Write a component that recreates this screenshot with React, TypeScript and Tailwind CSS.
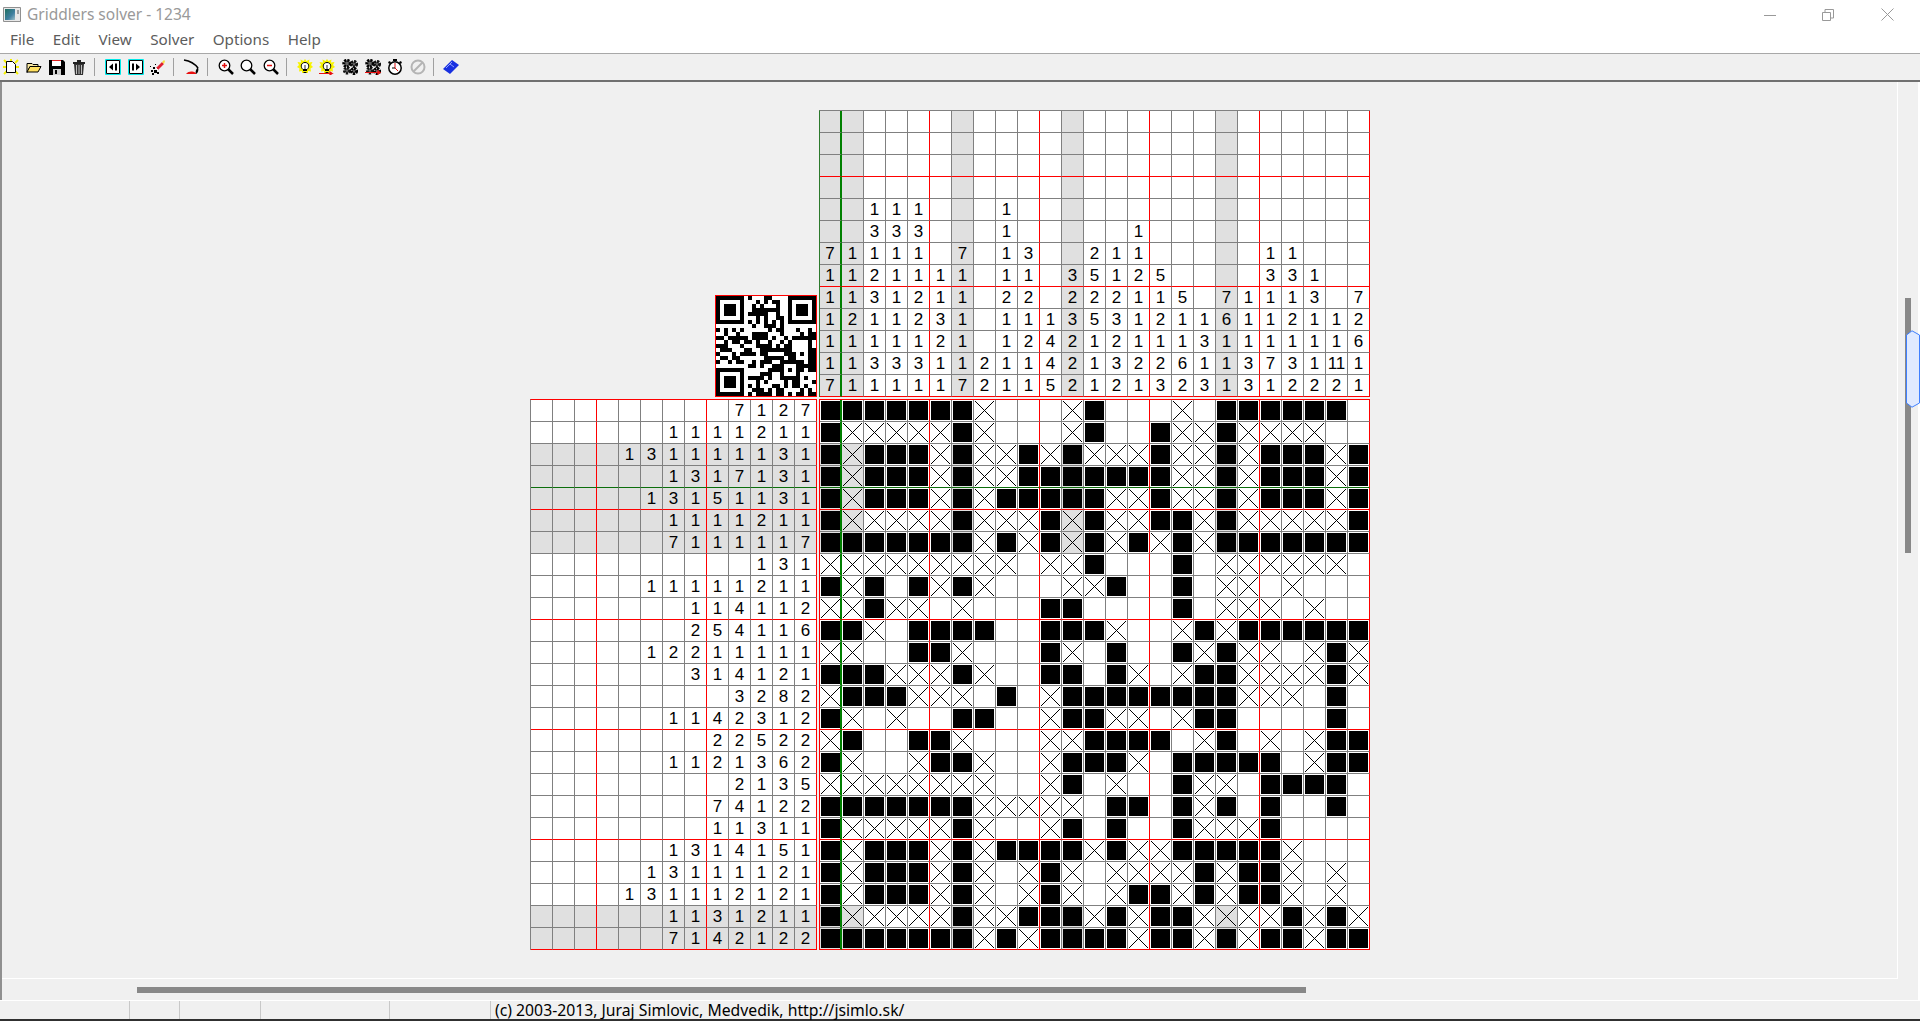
import * as React from "react";

const uiFont = "font-['Noto_Sans','Open_Sans',sans-serif]";

const topClues = [
  ". . . . . . . . . . . . . . . . . . . . . . . . .",
  ". . . . . . . . . . . . . . . . . . . . . . . . .",
  ". . . . . . . . . . . . . . . . . . . . . . . . .",
  ". . . . . . . . . . . . . . . . . . . . . . . . .",
  ". . 1 1 1 . . . 1 . . . . . . . . . . . . . . . .",
  ". . 3 3 3 . . . 1 . . . . . 1 . . . . . . . . . .",
  "7 1 1 1 1 . 7 . 1 3 . . 2 1 1 . . . . . 1 1 . . .",
  "1 1 2 1 1 1 1 . 1 1 . 3 5 1 2 5 . . . . 3 3 1 . .",
  "1 1 3 1 2 1 1 . 2 2 . 2 2 2 1 1 5 . 7 1 1 1 3 . 7",
  "1 2 1 1 2 3 1 . 1 1 1 3 5 3 1 2 1 1 6 1 1 2 1 1 2",
  "1 1 1 1 1 2 1 . 1 2 4 2 1 2 1 1 1 3 1 1 1 1 1 1 6",
  "1 1 3 3 3 1 1 2 1 1 4 2 1 3 2 2 6 1 1 3 7 3 1 11 1",
  "7 1 1 1 1 1 7 2 1 1 5 2 1 2 1 3 2 3 1 3 1 2 2 2 1",
].map((row) => row.split(" "));

const leftClues = [
  "7 1 2 7",
  "1 1 1 1 2 1 1",
  "1 3 1 1 1 1 1 3 1",
  "1 3 1 7 1 3 1",
  "1 3 1 5 1 1 3 1",
  "1 1 1 1 2 1 1",
  "7 1 1 1 1 1 7",
  "1 3 1",
  "1 1 1 1 1 2 1 1",
  "1 1 4 1 1 2",
  "2 5 4 1 1 6",
  "1 2 2 1 1 1 1 1",
  "3 1 4 1 2 1",
  "3 2 8 2",
  "1 1 4 2 3 1 2",
  "2 2 5 2 2",
  "1 1 2 1 3 6 2",
  "2 1 3 5",
  "7 4 1 2 2",
  "1 1 3 1 1",
  "1 3 1 4 1 5 1",
  "1 3 1 1 1 1 2 1",
  "1 3 1 1 1 2 1 2 1",
  "1 1 3 1 2 1 1",
  "7 1 4 2 1 2 2",
].map((row) => {
  const tokens = row.split(" ");
  return [...Array(13 - tokens.length).fill("."), ...tokens] as string[];
});

// # filled, x crossed, . unknown
const board = [
  "#######x...x#...x.######.",
  "#xxxxx#x...x#..#xx#xxxx..",
  "#x###x#xx#x#xxx#xx#x###x#",
  "#x###x#xx#######xx#x###x#",
  "#x###x#x#####xx#xx#x###x#",
  "#xxxxx#xxx#x#xx##x#xxxxx#",
  "#######x#x#x#x#x#x#######",
  "xxxxxxxxx.xx#...#.xxxxxx.",
  "#x#.#x#x...xx#..#.xx.x...",
  "xx#xx.x...##....#.xxx.x..",
  "##x.####..###x..x#x######",
  "xx..##x...#x.#..#x#xx.x#x",
  "###xxx#x..##.#x.x##xxxx#x",
  "x###xxx.#.x########xxx.#.",
  "#x.x..##..x##xx.x##....#.",
  "x#..##x...xx####.x#.x.x##",
  "#x..x##x..x###x.#####.x##",
  "xxxxxxxx..x#.x..#xx.####.",
  "#######xxxxx.##.#x#.#..#.",
  "#xxxxx#x..x#.#..#xxx#....",
  "#x###x#x####x#xx#####x...",
  "#x###x#x.x#x.xxxx#x##x.x.",
  "#x###x#x.x#x.x##x#x##x.x.",
  "#xxxxx#xx###x#x##xxxx#x#x",
  "#######x#x####x##x#x##x##",
];

const qr = [
  "#######.#...##....#######",
  "#.....#...#.#.##..#.....#",
  "#.###.#..#.#...#..#.###.#",
  "#.###.#..#######..#.###.#",
  "#.###.#.#####..#..#.###.#",
  "#.....#...#.#..##.#.....#",
  "#######.#.#.#.#.#.#######",
  ".........#..###.#........",
  "#.#.#.#......#.##...#..#.",
  "..#..#...####...#....#.##",
  "##.#####.####.#..#.######",
  "..#.##.##.#..#..#.#....#.",
  "###...#...####.#.##....#.",
  ".###...##..########....##",
  "#...#.####.##....###.#.##",
  ".##.##......#####.##...##",
  "#..#.##..#.###..######.##",
  "........##.#..###...#####",
  "#######......####.#.##.##",
  "#.....#....###..#...#....",
  "#.###.#.####.#..#####.#..",
  "#.###.#...#.#....#.##...#",
  "#.###.#.#.#...##.#.##.#..",
  "#.....#..###.#.##....#.#.",
  "#######.#.####.##.#.##.##",
];

const hiCols = [0, 1, 6, 11, 18];
const hiRows = [2, 3, 4, 5, 6, 23, 24];

const colBorder = (c: number) =>
  c === 0
    ? "border-r-2 border-r-[#008000]"
    : (c + 1) % 5 === 0
      ? "border-r border-r-[#ff0000]"
      : "border-r border-r-[#808080]";

const rowBorder = (r: number) =>
  r === 3
    ? "border-b border-b-[#0c6f0c]"
    : (r + 1) % 5 === 0
      ? "border-b border-b-[#ff0000]"
      : "border-b border-b-[#808080]";

function Clue({ value, cls }: { value: string; cls: string }) {
  return (
    <div
      className={`flex size-[22px] items-center justify-center text-[17px] leading-none text-black ${cls}`}
    >
      {value === "." ? "" : value}
    </div>
  );
}

function Cell({ state, r, c }: { state: string; r: number; c: number }) {
  const shaded = hiCols.includes(c) && hiRows.includes(r);
  return (
    <div
      className={`size-[22px] ${c === 0 ? "py-px pl-px" : "p-px"} ${shaded ? "bg-[#e0e0e0]" : "bg-white"} ${colBorder(c)} ${rowBorder(r)}`}
    >
      {state === "#" && <div className="size-full bg-black" />}
      {state === "x" && (
        <svg viewBox="0 0 19 19" className="block size-full" shapeRendering="crispEdges">
          <path d="M0 0 19 19M19 0 0 19" stroke="#000" strokeWidth="1" fill="none" />
        </svg>
      )}
    </div>
  );
}

function QrPreview() {
  return (
    <div className="grid grid-cols-[repeat(25,4px)] border border-[#ff0000] bg-white">
      {qr.flatMap((row, r) =>
        row.split("").map((m, c) => (
          <div key={`${r}-${c}`} className={`size-[4px] ${m === "#" ? "bg-black" : "bg-white"}`} />
        ))
      )}
    </div>
  );
}

function Puzzle() {
  return (
    <div className="grid grid-cols-[287px_551px] grid-rows-[287px_551px] gap-[2px] font-['Liberation_Sans',Arial,sans-serif]">
      <div className="flex items-end justify-end">
        <QrPreview />
      </div>

      {/* Column clues */}
      <div className="grid grid-cols-[repeat(25,22px)] border-t border-l border-t-[#808080] border-l-[#2c7a2c] bg-white">
        {topClues.flatMap((row, r) =>
          row.map((value, c) => (
            <Clue
              key={`${r}-${c}`}
              value={value}
              cls={`${hiCols.includes(c) ? "bg-[#e0e0e0]" : "bg-white"} ${colBorder(c)} ${
                (r + 1) % 5 === 3 ? "border-b border-b-[#ff0000]" : "border-b border-b-[#808080]"
              }`}
            />
          ))
        )}
      </div>

      {/* Row clues */}
      <div className="grid grid-cols-[repeat(13,22px)] border-t border-l border-t-[#ff0000] border-l-[#808080] bg-white">
        {leftClues.flatMap((row, r) =>
          row.map((value, c) => (
            <Clue
              key={`${r}-${c}`}
              value={value}
              cls={`${hiRows.includes(r) ? "bg-[#e0e0e0]" : "bg-white"} ${rowBorder(r)} ${
                (c + 1) % 5 === 3 ? "border-r border-r-[#ff0000]" : "border-r border-r-[#808080]"
              }`}
            />
          ))
        )}
      </div>

      {/* Board */}
      <div className="grid grid-cols-[repeat(25,22px)] border-t border-l border-[#ff0000] bg-white">
        {board.flatMap((row, r) =>
          row.split("").map((state, c) => <Cell key={`${r}-${c}`} state={state} r={r} c={c} />)
        )}
      </div>
    </div>
  );
}

/* ---- toolbar glyphs ---- */

function Ico({ children, w = 16 }: { children: React.ReactNode; w?: number }) {
  return (
    <div className="flex h-full w-[22.67px] shrink-0 items-center justify-center">
      <svg width={w} height={16} viewBox={`0 0 ${w} 16`} className="block">
        {children}
      </svg>
    </div>
  );
}

const Sep = () => (
  <div className="flex h-full w-[11px] shrink-0 items-center justify-center pr-[3px]">
    <div className="h-[18px] w-px bg-[#a0a0a0]" />
  </div>
);

const NewDoc = () => (
  <Ico>
    <path d="M1 1 4 4M15 1 12 4M0 8h3M13 8h3M1 15l3-3M15 15l-3-3M8 0v2" stroke="#f5f000" strokeWidth="2" />
    <path d="M3.500 2.500h6l3 3v8h-9z" fill="#fff" stroke="#000" />
  </Ico>
);
const OpenFolder = () => (
  <Ico>
    <path d="M1 4.500h5l1 1h5v2H4l-3 6z" fill="#f8e8a0" stroke="#000" />
    <path d="M4 7.500h11l-3 5.500H1z" fill="#ffe060" stroke="#000" />
  </Ico>
);
const Save = () => (
  <Ico>
    <path d="M0 1h14l2 2v13H0z" fill="#000" />
    <path d="M3 1h9v1H3z" fill="#e02020" />
    <path d="M3 2h9v5H3z" fill="#fff" />
    <path d="M4 10h8v6H4z" fill="#d0d0d0" />
    <path d="M6 11h2v4H6z" fill="#000" />
  </Ico>
);
const Trash = () => (
  <Ico>
    <path d="M2 3h12v2H2zM6 1h4v2H6z" fill="#222" />
    <path d="M3 5h10l-1 11H4z" fill="#333" />
    <path d="M5.500 6v9M8 6v9M10.500 6v9" stroke="#c0c0c0" />
  </Ico>
);
const BoxPrev = () => (
  <Ico>
    <path d="M.5.5h15v15H.5z" fill="#fff" stroke="#00e8e8" />
    <path d="M1.500 1.500h13v13h-13z" fill="#fff" stroke="#000" />
    <path d="M8 4.500v7L4 8zM10 4.500h2v7h-2z" fill="#000" />
  </Ico>
);
const BoxNext = () => (
  <Ico>
    <path d="M.5.5h15v15H.5z" fill="#fff" stroke="#00e8e8" />
    <path d="M1.500 1.500h13v13h-13z" fill="#fff" stroke="#000" />
    <path d="M4 4.500h2v7H4zM8 4.500v7L12 8z" fill="#000" />
  </Ico>
);
const Wand = () => (
  <Ico>
    <path d="M6 9 12 3l2 2-6 6z" fill="#e02030" />
    <path d="m12 3 2-2 1 1-1 3z" fill="#f8e040" />
    <path d="M6 9 8 11" stroke="#fff" />
    <path d="M3 8h2v2H3zM1 11h2v2H1zM4 11h3v3H4zM2 14h2v2H2zM7 13h2v2H7zM0 7h1v1H0zM5 5h1v1H5z" fill="#000" />
  </Ico>
);
const Scythe = () => (
  <Ico w={17}>
    <path d="M1 1C7 2 12 5 15 9" stroke="#000" strokeWidth="1.600" fill="none" />
    <path d="M15 8c1 3 0 6-2 7-1-2 0-5 2-7z" fill="#000" />
    <path d="M3 15c3-3 6-3 10-1v1z" fill="#e81010" />
  </Ico>
);
const Lens = ({ mark }: { mark?: "plus" | "minus" }) => (
  <Ico>
    <path d="M10 10l5 5" stroke="#000" strokeWidth="2.500" />
    <circle cx="6.500" cy="6.500" r="5.300" fill="#fff" stroke="#000" strokeWidth="1.300" />
    {mark && <path d="M4 6.500h5" stroke="#e01010" strokeWidth="1.500" />}
    {mark === "plus" && <path d="M6.500 4v5" stroke="#e01010" strokeWidth="1.500" />}
  </Ico>
);
const Bulb = ({ arrow }: { arrow?: boolean }) => (
  <Ico>
    <path d="M8 0 9.500 2 12.500 .5 12 3.500 15.500 3 14 6 16 8 13.500 9.500 14 12.500 11 12V14H5V12L2 12.500 2.500 9.500 0 8 2 6 .5 3 4 3.500 3.500 .5 6.500 2z" fill="#f8f400" />
    <path d="M6 10.500C3 8 4 3.500 8 3.500S13 8 10 10.500z" fill="#fff" stroke="#000" />
    <path d="M6 11.500h4M6.500 13.500h3" stroke="#000" />
    <path d="M7.500 6v4M8.500 6v4" stroke="#000" strokeWidth=".4" />
    {arrow && <path d="M0 14.500h13l-2-1.500v3l2-1.500" stroke="#e81010" strokeWidth="1.200" fill="#e81010" />}
  </Ico>
);
const Gears = ({ arrow }: { arrow?: boolean }) => (
  <Ico>
    <circle cx="5" cy="4.500" r="3.200" fill="#666" stroke="#000" strokeWidth="3" strokeDasharray="2 1" />
    <circle cx="12" cy="5" r="2.600" fill="#666" stroke="#111" strokeWidth="3" strokeDasharray="2 1" />
    <circle cx="5" cy="11.500" r="2.600" fill="#666" stroke="#111" strokeWidth="3" strokeDasharray="2 1" />
    <circle cx="12" cy="12" r="2.600" fill="#666" stroke="#000" strokeWidth="3" strokeDasharray="2 1" />
    {arrow && <path d="M0 13.500h15l-2-1.500v3l2-1.500" stroke="#e81010" strokeWidth="1.200" fill="#e81010" />}
  </Ico>
);
const Watch = () => (
  <Ico>
    <path d="M6 0h4v2H6zM2 2l2 1-1 2-2-1zM14 2l-2 1 1 2 2-1z" fill="#000" />
    <circle cx="8" cy="9" r="6.200" fill="#fff" stroke="#000" strokeWidth="1.500" />
    <path d="M8 4v5l3 3" stroke="#e01010" fill="none" />
    <path d="M8 9h-3" stroke="#000" />
  </Ico>
);
const Forbid = () => (
  <Ico>
    <circle cx="8" cy="8" r="6.500" fill="none" stroke="#b4b4b4" strokeWidth="2" />
    <path d="M3.500 12.500l9-9" stroke="#b4b4b4" strokeWidth="2" />
  </Ico>
);
const Eraser = () => (
  <Ico>
    <path d="M0 10 9 1l7 5-9 9z" fill="#1830e0" />
    <path d="M3 9 9 3M7 5l4 3" stroke="#90a0ff" />
  </Ico>
);

function AppIcon() {
  return (
    <svg width="18" height="15" viewBox="0 0 18 15" className="block">
      <defs>
        <linearGradient id="appFill" x1="0" x2="1" y1="0" y2="1">
          <stop offset="0" stopColor="#1f6f5f" />
          <stop offset="0.6" stopColor="#3f7fa0" />
          <stop offset="1" stopColor="#a0c0c8" />
        </linearGradient>
      </defs>
      <path d="M.5.500h17v14H.5z" fill="#e8e8e8" stroke="#909090" />
      <path d="M2 2h10v11H2z" fill="url(#appFill)" />
      <path d="M14 3h2v4h-2z" fill="#a0a0a0" />
    </svg>
  );
}

const menus = ["File", "Edit", "View", "Solver", "Options", "Help"];
const statusCells = ["w-[130px]", "w-[50px]", "w-[81px]", "w-[129px]", "w-[101px]"];

export default function App() {
  return (
    <div className={`flex h-[1021px] w-[1920px] flex-col overflow-hidden bg-[#f0f0f0] ${uiFont}`}>
      {/* Title bar */}
      <div className="flex h-[29px] shrink-0 items-center bg-white pl-[3px]">
        <AppIcon />
        <span className="ml-[6px] text-[15.5px] leading-none text-[#999999]">Griddlers solver - 1234</span>
        <div className="ml-auto flex items-center text-[#999999]">
          <svg width="12" height="12" viewBox="0 0 12 12" className="mr-[46px] block">
            <path d="M0 6.500h12" stroke="currentColor" />
          </svg>
          <svg width="12" height="12" viewBox="0 0 12 12" className="mr-[47px] block">
            <path d="M.5 3.500h8v8h-8zM3 3V.5h8.500V9H9" fill="none" stroke="currentColor" />
          </svg>
          <svg width="13" height="13" viewBox="0 0 13 13" className="mr-[26px] block">
            <path d="M.5.500l12 12M12.500.500l-12 12" fill="none" stroke="currentColor" />
          </svg>
        </div>
      </div>

      {/* Menu */}
      <div className="flex h-[25px] shrink-0 items-center gap-[18.5px] border-b border-b-[#a8a8a8] bg-white pb-[2px] pl-[10px] text-[15.2px] leading-none text-[#5c5c5c]">
        {menus.map((m) => (
          <span key={m}>{m}</span>
        ))}
      </div>

      {/* Toolbar */}
      <div className="flex h-[28px] shrink-0 items-center border-b-2 border-b-[#707070]">
        <NewDoc />
        <OpenFolder />
        <Save />
        <Trash />
        <Sep />
        <BoxPrev />
        <BoxNext />
        <Wand />
        <Sep />
        <Scythe />
        <Sep />
        <Lens mark="plus" />
        <Lens />
        <Lens mark="minus" />
        <Sep />
        <Bulb />
        <Bulb arrow />
        <Gears />
        <Gears arrow />
        <Watch />
        <Forbid />
        <Sep />
        <Eraser />
      </div>

      {/* Client area */}
      <div className="flex min-h-0 flex-1 border-l-2 border-l-[#909090]">
        <div className="flex min-w-0 flex-1 flex-col">
          <div className="flex flex-1 border-r border-b border-r-white border-b-white pt-[28px] pl-[528px]">
            <Puzzle />
          </div>
          <div className="flex h-[21px] shrink-0 items-center pl-[135px]">
            <div className="h-[6px] w-[1169px] bg-[#888888]" />
          </div>
        </div>
        <div className="w-[22px] shrink-0 border-r-2 border-r-white pt-[216px] pl-[7px]">
          <div className="relative h-[255px] w-[6px] bg-[#888888]">
            <svg width="14" height="78" viewBox="0 0 14 78" className="absolute top-[32px] left-[1px] block">
              <path d="M.5 5 6 .8 13.500 5V73L6 77.200.5 73z" fill="#e0eaff" stroke="#4080ff" />
            </svg>
          </div>
        </div>
      </div>

      {/* Status bar */}
      <div className="flex h-[21px] shrink-0 items-stretch border-t border-t-white border-b-2 border-b-[#303030] text-[15.75px] leading-none text-black">
        {statusCells.map((w) => (
          <div key={w} className={`${w} border-r border-r-[#c8c8c8]`} />
        ))}
        <span className="mt-[2px] self-center pl-[4px]">(c) 2003-2013, Juraj Simlovic, Medvedik, http://jsimlo.sk/</span>
      </div>
    </div>
  );
}
